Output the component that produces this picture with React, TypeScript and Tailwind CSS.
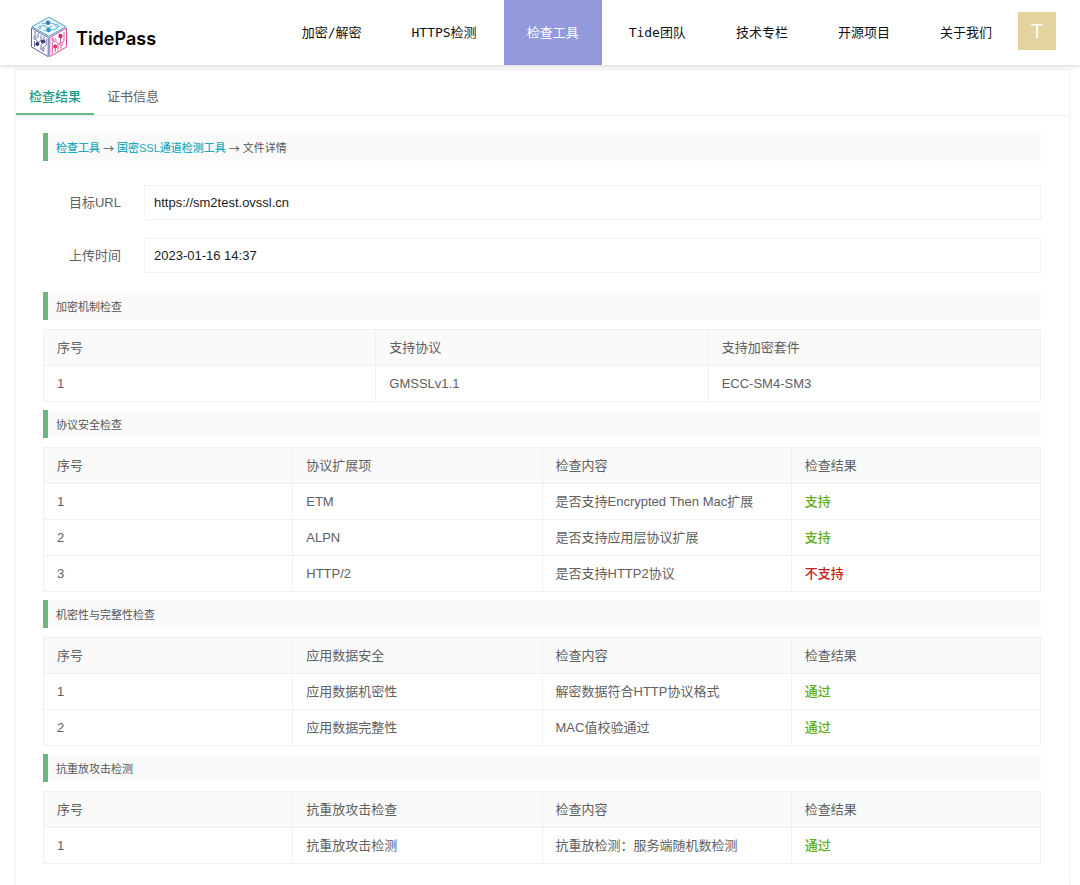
import { useState } from 'react';

type Cell = string | { text: string; ok: boolean };

interface CheckSection {
  title: string;
  columns: string[];
  rows: Cell[][];
}

const NAV_ITEMS = ['加密/解密', 'HTTPS检测', '检查工具', 'Tide团队', '技术专栏', '开源项目', '关于我们'];

const TABS = ['检查结果', '证书信息'];

const SECTIONS: CheckSection[] = [
  {
    title: '加密机制检查',
    columns: ['序号', '支持协议', '支持加密套件'],
    rows: [['1', 'GMSSLv1.1', 'ECC-SM4-SM3']],
  },
  {
    title: '协议安全检查',
    columns: ['序号', '协议扩展项', '检查内容', '检查结果'],
    rows: [
      ['1', 'ETM', '是否支持Encrypted Then Mac扩展', { text: '支持', ok: true }],
      ['2', 'ALPN', '是否支持应用层协议扩展', { text: '支持', ok: true }],
      ['3', 'HTTP/2', '是否支持HTTP2协议', { text: '不支持', ok: false }],
    ],
  },
  {
    title: '机密性与完整性检查',
    columns: ['序号', '应用数据安全', '检查内容', '检查结果'],
    rows: [
      ['1', '应用数据机密性', '解密数据符合HTTP协议格式', { text: '通过', ok: true }],
      ['2', '应用数据完整性', 'MAC值校验通过', { text: '通过', ok: true }],
    ],
  },
  {
    title: '抗重放攻击检测',
    columns: ['序号', '抗重放攻击检查', '检查内容', '检查结果'],
    rows: [['1', '抗重放攻击检测', '抗重放检测：服务端随机数检测', { text: '通过', ok: true }]],
  },
];

function Logo() {
  return (
    <svg viewBox="0 0 38 42" className="w-[38px] h-[42px]" fill="none" strokeWidth="1" aria-hidden="true">
      {/* top face */}
      <g stroke="#45a3cc">
        <path d="M19 1.2 36 10.8 19 20.4 2 10.8Z" fill="#e6f6fb" />
        <path d="M9 11.5 13 9.2 18 12M12 7.5 17 7.8M20 7l6 1.6 3 2.2M19 14l6-.5 3-2M14 14.5l5-.5M22 10.5l-4 1.5" strokeWidth="0.8" />
        <circle cx="18" cy="6.8" r="2.2" fill="#3284bd" stroke="none" />
        <circle cx="18.5" cy="14" r="2.2" fill="#2b96c8" stroke="none" />
        <circle cx="10" cy="11.3" r="1.3" fill="#fff" strokeWidth="0.8" />
        <circle cx="27" cy="9.5" r="1.3" fill="#fff" strokeWidth="0.8" />
      </g>
      {/* left face */}
      <g stroke="#5f62a6">
        <path d="M1.5 12 18.2 21.5V40.6L1.5 31Z" />
        <path d="M5 15v8l3 3v3M8 17v5M11 19v5l-4 4M14 20.5v5.5l-3 3v5M16.2 23v6l-3 3v4M4.5 25v6" strokeWidth="0.9" />
        <circle cx="7.3" cy="28" r="2.1" fill="#343c78" stroke="none" />
        <circle cx="13" cy="25.5" r="2.1" fill="#343c78" stroke="none" />
        <circle cx="5" cy="22" r="1.3" fill="#fff" strokeWidth="0.8" />
        <circle cx="13" cy="33" r="1.3" fill="#fff" strokeWidth="0.8" />
      </g>
      {/* right face */}
      <g stroke="#dc4a96">
        <path d="M36.5 12 19.8 21.5V40.6L36.5 31Z" />
        <path d="M22.3 38V27l3-3M25.3 36v-6M28 34.5v-7l-3-3M30.5 20v6l-2.5 2.5M31 33v-5l3-3V16M22.3 21v4" strokeWidth="0.9" />
        <circle cx="30.5" cy="20" r="2.2" fill="#c92d72" stroke="none" />
        <circle cx="25.2" cy="30.5" r="2.1" fill="#d5337b" stroke="none" />
        <circle cx="24.8" cy="24" r="1.4" fill="#fff" strokeWidth="0.8" />
        <circle cx="31" cy="28" r="1.3" fill="#fff" strokeWidth="0.8" />
      </g>
    </svg>
  );
}

function Header() {
  return (
    <header className="relative flex items-center justify-between h-[65px] pl-[30px] pr-6 bg-white shadow-[0_1px_4px_rgba(0,0,0,0.18)]">
      <a href="#" className="flex items-center gap-2 pt-2">
        <Logo />
        <span className="pt-1 text-lg font-semibold text-black font-[Inter,sans-serif]">TidePass</span>
      </a>
      <div className="flex items-center gap-[3px] h-full">
        <nav className="flex gap-1 h-full">
          {NAV_ITEMS.map((item) => (
            <a
              key={item}
              href="#"
              className={`flex items-center px-[23px] text-[13px] whitespace-nowrap font-['DejaVu_Sans_Mono','Noto_Sans_CJK_SC',monospace] ${
                item === '检查工具' ? 'bg-[#9299dd] text-white' : 'text-[#111]'
              }`}
            >
              {item}
            </a>
          ))}
        </nav>
        <button className="w-[38px] h-[38px] mb-1 bg-[#e3d39c] text-white text-xl">T</button>
      </div>
    </header>
  );
}

function SectionBar({ children }: { children: React.ReactNode }) {
  return (
    <div className="flex items-center h-7 pt-0.5 pl-2 border-l-5 border-[#6ab582] bg-[#fafafa] text-[11px] text-[#555]">
      {children}
    </div>
  );
}

function CheckTable({ section }: { section: CheckSection }) {
  return (
    <section className="mb-2">
      <SectionBar>
        <h2>{section.title}</h2>
      </SectionBar>
      <table className="w-full mt-[9px] table-fixed border-collapse text-[13px] leading-5 text-[#606060]">
        <thead className="bg-[#fafafa]">
          <tr className="h-9">
            {section.columns.map((col) => (
              <th key={col} className="px-[13px] text-left font-normal border border-[#f0f0f0]">{col}</th>
            ))}
          </tr>
        </thead>
        <tbody>
          {section.rows.map((row, i) => (
            <tr key={i} className="h-9">
              {row.map((cell, j) => (
                <td key={j} className="px-[13px] border border-[#f0f0f0]">
                  {typeof cell === 'string' ? (
                    cell
                  ) : (
                    <span className={`font-medium ${cell.ok ? 'text-[#5fae1c]' : 'text-[#c22222]'}`}>{cell.text}</span>
                  )}
                </td>
              ))}
            </tr>
          ))}
        </tbody>
      </table>
    </section>
  );
}

function Field({ id, label, value }: { id: string; label: string; value: string }) {
  return (
    <div className="flex items-center">
      <label htmlFor={id} className="w-[78px] mr-[23px] text-right text-[13px] text-[#606060]">{label}</label>
      <input
        id={id}
        readOnly
        defaultValue={value}
        className="flex-1 h-[35px] px-[9px] border border-[#f3f3f3] text-[13px] text-[#1c1c1c] focus:outline-none"
      />
    </div>
  );
}

function Arrow() {
  return <span className="font-['Noto_Sans_CJK_SC',sans-serif]">→</span>;
}

export default function App() {
  const [tab, setTab] = useState(TABS[0]);

  return (
    <div className="min-h-screen flex flex-col bg-white font-['Liberation_Sans','Noto_Sans_CJK_SC',sans-serif]">
      <Header />
      <main className="flex-1 mt-1 ml-[15px] mr-2.5 border border-b-0 border-[#f3f3f3] shadow-[0_0_2px_rgba(0,0,0,0.06)]">
        <div className="flex h-[46px] border-b border-[#f0f0f0]">
          {TABS.map((name) => (
            <button
              key={name}
              onClick={() => setTab(name)}
              className={`px-[13px] pt-2.5 text-[13px] border-b-2 ${
                tab === name ? 'text-[#1a9a83] font-medium border-[#6ab58c]' : 'text-[#606060] border-transparent'
              }`}
            >
              {name}
            </button>
          ))}
        </div>

        {tab === TABS[0] && (
          <div className="pt-[17px] pb-3 pl-[27px] pr-7">
            <SectionBar>
              <nav className="flex items-center gap-[3px]">
                <a href="#" className="text-[#22a9bd] font-medium">检查工具</a>
                <Arrow />
                <a href="#" className="text-[#22a9bd] font-medium">国密SSL通道检测工具</a>
                <Arrow />
                <span>文件详情</span>
              </nav>
            </SectionBar>

            <div className="flex flex-col gap-[18px] pt-6 pb-[19px]">
              <Field id="target-url" label="目标URL" value="https://sm2test.ovssl.cn" />
              <Field id="upload-time" label="上传时间" value="2023-01-16 14:37" />
            </div>

            {SECTIONS.map((section) => (
              <CheckTable key={section.title} section={section} />
            ))}
          </div>
        )}
      </main>
    </div>
  );
}
